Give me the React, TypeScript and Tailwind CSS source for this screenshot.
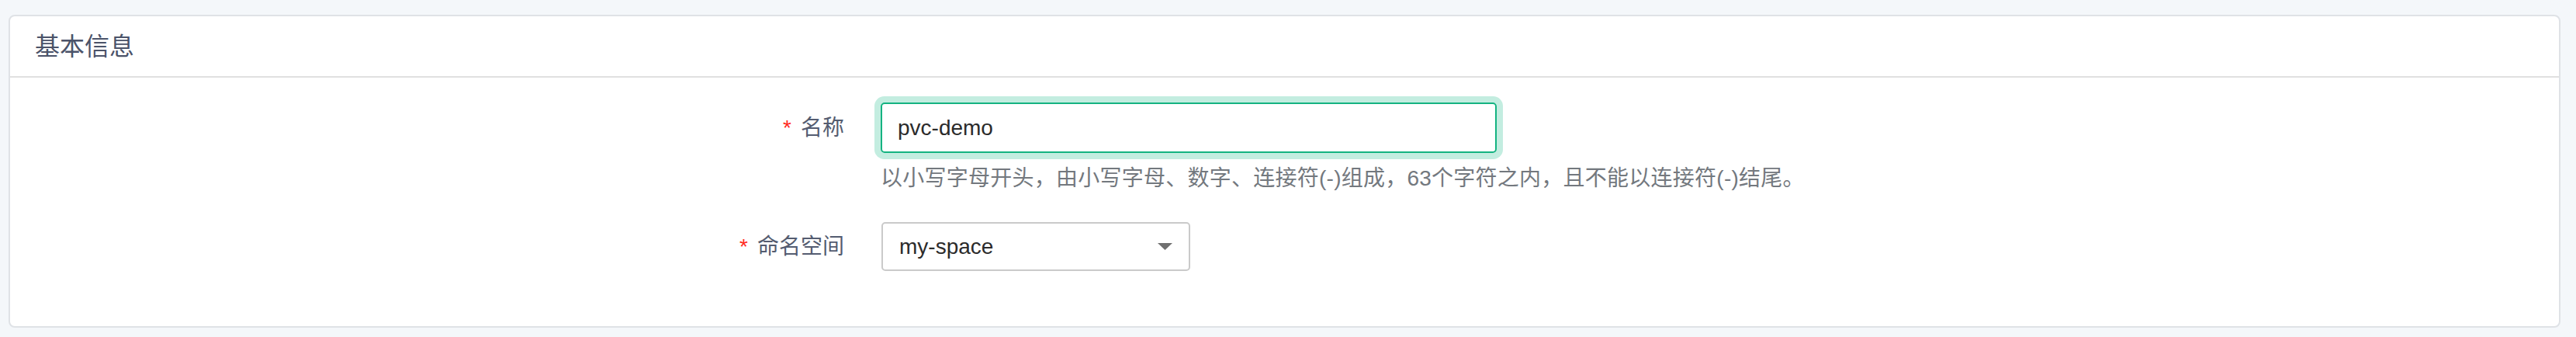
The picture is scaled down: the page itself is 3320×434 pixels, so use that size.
import { useState } from "react";

function Label({ text }: { text: string }) {
  return (
    <div className="w-[1075px] shrink-0 flex items-center justify-end text-[28px] text-[#545c70]">
      <span className="text-[#ff2a1f] mr-[12px] text-[28px] leading-none">*</span>
      <span>{text}</span>
    </div>
  );
}

export default function App() {
  const [name, setName] = useState("pvc-demo");
  const [space] = useState("my-space");

  return (
    <div className="w-[3320px] h-[434px] bg-[#f4f7fa] pl-[11px] pr-[20px] pt-[19px] pb-[12px] font-['Liberation_Sans','Noto_Sans_CJK_SC',sans-serif]">
      <div className="h-full bg-white border-2 border-[#dfe2e6] rounded-[8px] flex flex-col">
        <div className="h-[79px] shrink-0 flex items-center px-[32px] border-b-2 border-[#e0e0e0]">
          <h2 className="text-[32px] text-[#4b5369] leading-none">基本信息</h2>
        </div>

        <div className="pt-[32px]">
          <div className="flex items-center gap-[47px]">
            <Label text="名称" />
            <input
              value={name}
              onChange={(e) => setName(e.target.value)}
              className="w-[794px] h-[65px] px-[20px] border-2 border-[#14b381] rounded-[5px] shadow-[0_0_0_8px_#c3ede0] outline-none text-[28px] text-[#2b2b2b]"
            />
          </div>
          <div className="flex gap-[47px]">
            <div className="w-[1075px] shrink-0" />
            <p className="mt-[13px] text-[28px] leading-[40px] text-[#73787e] whitespace-nowrap tracking-[0.25px]">
              以小写字母开头，由小写字母、数字、连接符(-)组成，63个字符之内，且不能以连接符(-)结尾。
            </p>
          </div>

          <div className="flex items-center gap-[48px] mt-[36px]">
            <Label text="命名空间" />
            <div className="w-[398px] h-[63px] border-2 border-[#cacaca] rounded-[5px] flex items-center justify-between pl-[21px] pr-[21px]">
              <span className="text-[28px] text-[#2b2b2b]">{space}</span>
              <svg width="19" height="9" viewBox="0 0 19 9">
                <path d="M0 0 L19 0 L9.5 9 Z" fill="#707070" />
              </svg>
            </div>
          </div>
        </div>
      </div>
    </div>
  );
}
